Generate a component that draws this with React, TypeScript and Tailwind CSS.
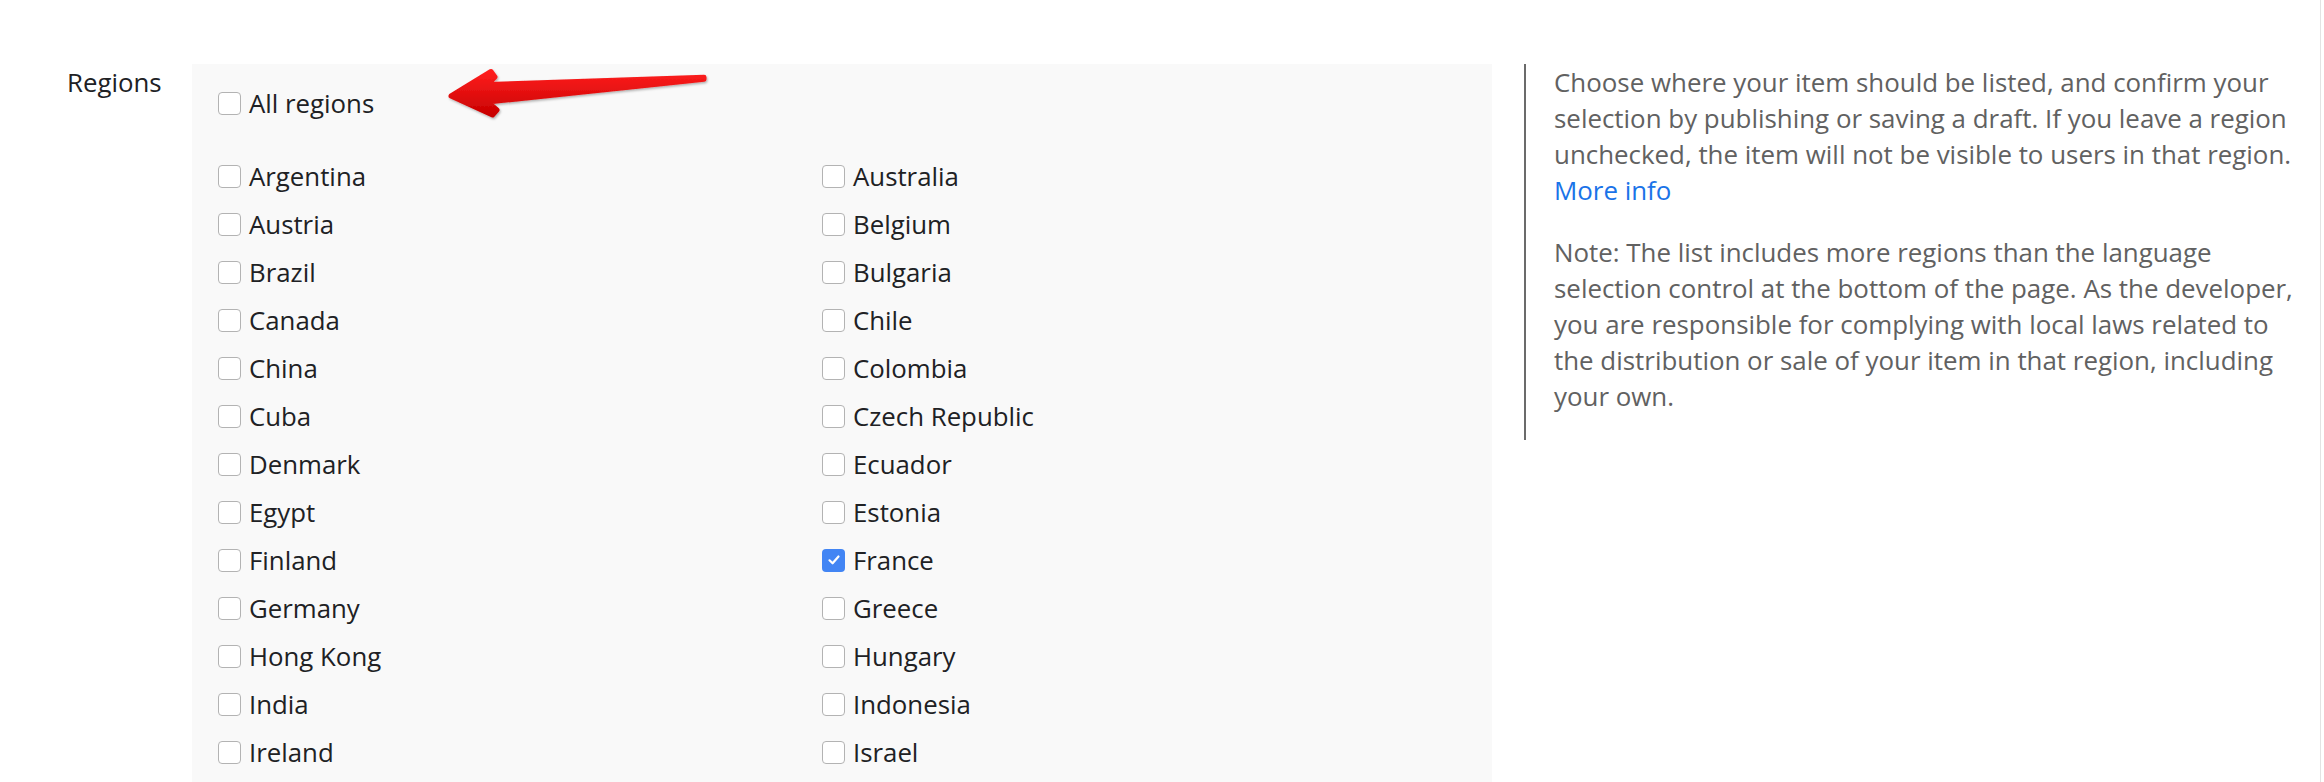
import React from "react";

const leftCol = [
  "Argentina",
  "Austria",
  "Brazil",
  "Canada",
  "China",
  "Cuba",
  "Denmark",
  "Egypt",
  "Finland",
  "Germany",
  "Hong Kong",
  "India",
  "Ireland",
];
const rightCol = [
  "Australia",
  "Belgium",
  "Bulgaria",
  "Chile",
  "Colombia",
  "Czech Republic",
  "Ecuador",
  "Estonia",
  "France",
  "Greece",
  "Hungary",
  "Indonesia",
  "Israel",
];

function Box({ checked }: { checked?: boolean }) {
  if (checked) {
    return (
      <span className="flex h-[23px] w-[23px] shrink-0 items-center justify-center rounded-[4px] bg-[#4285f4]">
        <svg width="16" height="16" viewBox="0 0 16 16" fill="none">
          <path
            d="M3.5 8.3 L6.6 11.3 L12.5 4.5"
            stroke="white"
            strokeWidth="2.2"
            strokeLinecap="round"
            strokeLinejoin="round"
          />
        </svg>
      </span>
    );
  }
  return (
    <span className="h-[23px] w-[23px] shrink-0 rounded-[4px] border-[1.5px] border-[#b3b3b3] bg-white" />
  );
}

function Row({ label, checked }: { label: string; checked?: boolean }) {
  return (
    <div className="flex h-[48px] items-center">
      <Box checked={checked} />
      <span className="ml-[8px] text-[25.8px] leading-[48px] text-[#202124]">{label}</span>
    </div>
  );
}

function Arrow() {
  return (
    <svg
      className="pointer-events-none absolute left-[250px] top-[-4px]"
      width="272"
      height="72"
      viewBox="0 0 272 72"
    >
      <defs>
        <linearGradient id="arrowGrad" x1="0" y1="0" x2="0" y2="1">
          <stop offset="0" stopColor="#ff1f1f" />
          <stop offset="1" stopColor="#c80000" />
        </linearGradient>
        <filter id="arrowShadow" x="-10%" y="-30%" width="120%" height="160%">
          <feDropShadow dx="1" dy="1.5" stdDeviation="1" floodColor="#000" floodOpacity="0.3" />
        </filter>
      </defs>
      <polygon
        points="9,36 49,11.5 53,17 45.5,24.5 262,17.2 262,19.2 45.5,42 55,50 50.5,55"
        fill="url(#arrowGrad)"
        stroke="url(#arrowGrad)"
        strokeWidth="5"
        strokeLinejoin="round"
        filter="url(#arrowShadow)"
      />
    </svg>
  );
}

export default function App() {
  const rows: { label: string; checked?: boolean }[] = [];
  for (let i = 0; i < leftCol.length; i++) {
    rows.push({ label: leftCol[i] });
    rows.push({ label: rightCol[i], checked: rightCol[i] === "France" });
  }

  return (
    <div className="relative h-[782px] w-full overflow-hidden bg-white font-['Open_Sans',sans-serif]">
      <div className="flex h-full items-start pt-[64px]">
        <div className="w-[192px] shrink-0 pl-[67px] text-[25.8px] leading-[36px] text-[#202124]">
          Regions
        </div>
        <div className="relative w-[1300px] shrink-0 self-stretch bg-[#f9f9f9] pl-[26px] pt-[15px]">
          <Arrow />
          <div className="mb-[25px]">
            <Row label="All regions" />
          </div>
          <div className="grid grid-cols-[604px_604px]">
            {rows.map((r, i) => (
              <Row key={i} label={r.label} checked={r.checked} />
            ))}
          </div>
        </div>
        <div className="ml-[32px] shrink-0 border-l-2 border-[#6b6b6b] pb-[26px] pl-[28px] text-[25.9px] leading-[36px] text-[#616161] whitespace-nowrap">
          <p>
            Choose where your item should be listed, and confirm your
            <br />
            selection by publishing or saving a draft. If you leave a region
            <br />
            unchecked, the item will not be visible to users in that region.
            <br />
            <a className="text-[#1a73e8]">More info</a>
          </p>
          <p className="mt-[26px]">
            Note: The list includes more regions than the language
            <br />
            selection control at the bottom of the page. As the developer,
            <br />
            you are responsible for complying with local laws related to
            <br />
            the distribution or sale of your item in that region, including
            <br />
            your own.
          </p>
        </div>
      </div>
      <div className="absolute right-[3px] top-0 h-full w-px bg-[#e3e3e3]" />
    </div>
  );
}
